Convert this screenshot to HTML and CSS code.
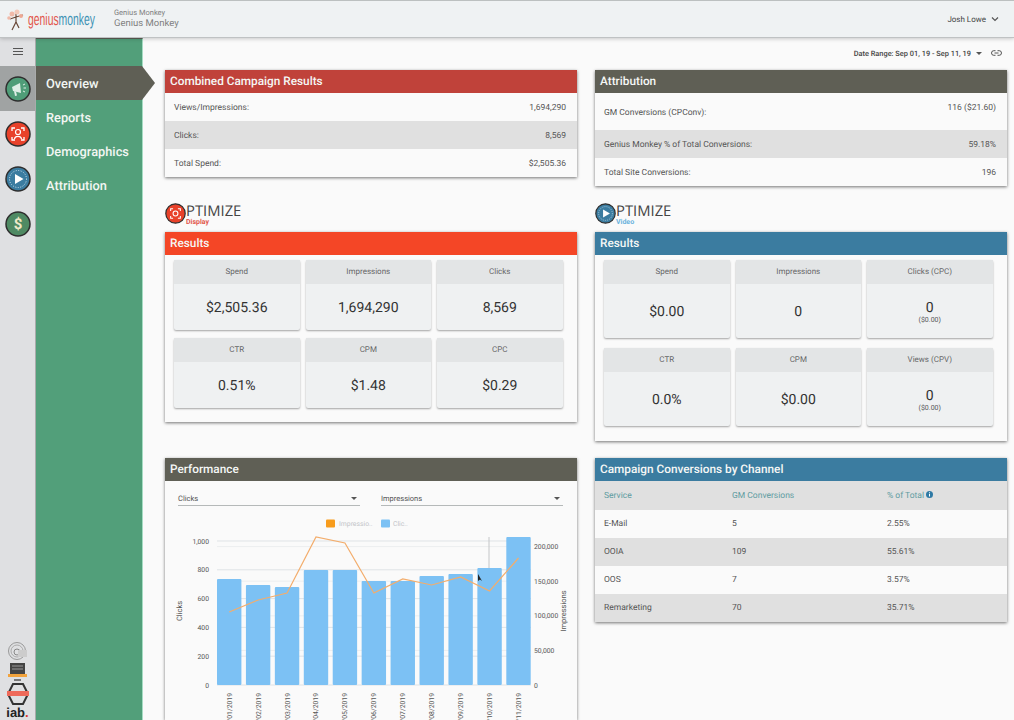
FILE: index.html
```html
<!DOCTYPE html>
<html lang="en">
<head>
  <meta charset="UTF-8">
  <title>Genius Monkey</title>
  <link rel="stylesheet" href="styles.css">
</head>
<body>

  <header class="topbar">
    <div class="brand">
      <svg class="brand-logo" width="90" height="26" viewBox="0 0 90 26">
        <g stroke="#6b4a3a" stroke-width="1.2" fill="none">
          <path d="M10 8 L10 16 M10 16 L6 24 M10 16 L13 22 M10 11 L4 13 M10 11 L17 9"/>
        </g>
        <circle cx="6" cy="8" r="2.500" fill="#f0b9a8"/>
        <circle cx="11" cy="6" r="2.500" fill="#f3c8b8"/>
        <circle cx="15" cy="10" r="2" fill="#eda894"/>
        <circle cx="3" cy="12" r="1.800" fill="#f0b9a8"/>
        <text x="22" y="19" class="brand-word" textLength="67" lengthAdjust="spacingAndGlyphs"><tspan class="brand-red">genius</tspan><tspan class="brand-blue">monkey</tspan></text>
      </svg>
      <div class="brand-names">
        <div class="brand-small">Genius Monkey</div>
        <div class="brand-big">Genius Monkey</div>
      </div>
    </div>
    <div class="user">
      Josh Lowe
      <svg width="8" height="6" viewBox="0 0 8 6"><path d="M1 1.500 L4 4.500 L7 1.500" fill="none" stroke="#555" stroke-width="1.200"/></svg>
    </div>
  </header>

  <div class="app">
    <aside class="rail">
      <div class="burger"><span></span><span></span><span></span></div>

      <div class="rail-item active">
        <svg width="26" height="26" viewBox="0 0 26 26">
          <circle cx="13" cy="13" r="12" fill="#4f9d78" stroke="#2e2e2e" stroke-width="1.500"/>
          <path d="M7 11 L15 7 L16 17 L8 15 Z" fill="#dfeee6"/>
          <path d="M9 15 L10 20 L12 19.500 L11 15.500" fill="#dfeee6"/>
          <path d="M18 9 L20 8 M18.500 12 L21 12 M18 15 L20 16" stroke="#dfeee6" stroke-width="1"/>
        </svg>
      </div>
      <div class="rail-item">
        <svg width="26" height="26" viewBox="0 0 26 26">
          <circle cx="13" cy="13" r="12" fill="#e8412a" stroke="#2e2e2e" stroke-width="1.500"/>
          <path d="M7 10 V7 H10 M16 7 H19 V10 M19 16 V19 H16 M10 19 H7 V16" fill="none" stroke="#fff" stroke-width="1.300"/>
          <circle cx="13" cy="11" r="2.500" fill="none" stroke="#fff" stroke-width="1.200"/>
          <path d="M9.500 18 C10 14.500 16 14.500 16.500 18" fill="none" stroke="#fff" stroke-width="1.200"/>
        </svg>
      </div>
      <div class="rail-item">
        <svg width="26" height="26" viewBox="0 0 26 26">
          <circle cx="13" cy="13" r="12" fill="#3b7ca0" stroke="#2e2e2e" stroke-width="1.500"/>
          <circle cx="13" cy="13" r="8.500" fill="none" stroke="#cfe3ee" stroke-width="1" stroke-dasharray="1 1.500"/>
          <path d="M10 8 L18.500 13 L10 18 Z" fill="#fff"/>
        </svg>
      </div>
      <div class="rail-item">
        <svg width="26" height="26" viewBox="0 0 26 26">
          <circle cx="13" cy="13" r="12" fill="#4f8a63" stroke="#2e2e2e" stroke-width="1.500"/>
          <text x="13" y="18" class="rail-dollar" text-anchor="middle">$</text>
        </svg>
      </div>

      <div class="rail-foot">
        <svg width="22" height="20" viewBox="0 0 22 20">
          <circle cx="10" cy="10" r="8.500" fill="none" stroke="#999" stroke-width="1"/>
          <circle cx="10" cy="10" r="6" fill="none" stroke="#aaa" stroke-width="1"/>
          <circle cx="10" cy="11" r="3" fill="none" stroke="#888" stroke-width="1"/>
          <rect x="11" y="9" width="9" height="7" fill="#ccc"/>
        </svg>
        <svg width="22" height="20" viewBox="0 0 22 20">
          <rect x="3" y="1" width="15" height="11" fill="#444"/>
          <path d="M5 4 H16 M5 7 H16" stroke="#999" stroke-width="1"/>
          <rect x="1" y="12" width="19" height="3" fill="#f2a33c"/>
          <path d="M7 18 H14" stroke="#555" stroke-width="1.500"/>
        </svg>
        <svg width="24" height="22" viewBox="0 0 24 22">
          <path d="M7 1 H17 L22 11 L17 21 H7 L2 11 Z" fill="none" stroke="#333" stroke-width="2"/>
          <rect x="1" y="8" width="22" height="5" fill="#ee6a5a"/>
        </svg>
        <div class="iab">iab<span>.</span></div>
      </div>
    </aside>

    <nav class="side-menu">
      <a class="menu-item active">Overview</a>
      <a class="menu-item">Reports</a>
      <a class="menu-item">Demographics</a>
      <a class="menu-item">Attribution</a>
    </nav>

    <main class="content">
      <div class="date-range">
        <span>Date Range: Sep 01, 19 - Sep 11, 19</span>
        <span class="caret"></span>
        <svg width="11" height="6" viewBox="0 0 11 6"><path d="M4.500 .7 H2.800 a2.300 2.300 0 0 0 0 4.600 H4.500 M6.500 .7 H8.200 a2.300 2.300 0 0 1 0 4.600 H6.500 M3.500 3 H7.500" fill="none" stroke="#444" stroke-width=".9"/></svg>
      </div>

      <div class="dash-grid">
        <section class="card">
          <h2 class="card-head red">Combined Campaign Results</h2>
          <div class="row"><span>Views/Impressions:</span><span>1,694,290</span></div>
          <div class="row striped"><span>Clicks:</span><span>8,569</span></div>
          <div class="row"><span>Total Spend:</span><span>$2,505.36</span></div>
        </section>

        <section class="card">
          <h2 class="card-head dark">Attribution</h2>
          <div class="row row-tall"><span class="label-low">GM Conversions (CPConv):</span><span class="value-high">116 ($21.60)</span></div>
          <div class="row striped"><span>Genius Monkey % of Total Conversions:</span><span>59.18%</span></div>
          <div class="row"><span>Total Site Conversions:</span><span>196</span></div>
        </section>

        <div class="product">
          <div class="optimize">
            <svg width="21" height="21" viewBox="0 0 26 26">
              <circle cx="13" cy="13" r="12" fill="#e8412a" stroke="#2e2e2e" stroke-width="1.500"/>
              <path d="M7 10 V7 H10 M16 7 H19 V10 M19 16 V19 H16 M10 19 H7 V16" fill="none" stroke="#fff" stroke-width="1.300"/>
              <circle cx="13" cy="13" r="3" fill="none" stroke="#fff" stroke-width="1.300"/>
            </svg>
            <div class="optimize-text">
              <div class="optimize-word">PTIMIZE</div>
              <div class="optimize-sub display">Display</div>
            </div>
          </div>
          <section class="card">
            <h2 class="card-head orange">Results</h2>
            <div class="tiles">
              <div class="tile"><div class="tile-head">Spend</div><div class="tile-body">$2,505.36</div></div>
              <div class="tile"><div class="tile-head">Impressions</div><div class="tile-body">1,694,290</div></div>
              <div class="tile"><div class="tile-head">Clicks</div><div class="tile-body">8,569</div></div>
              <div class="tile"><div class="tile-head">CTR</div><div class="tile-body">0.51%</div></div>
              <div class="tile"><div class="tile-head">CPM</div><div class="tile-body">$1.48</div></div>
              <div class="tile"><div class="tile-head">CPC</div><div class="tile-body">$0.29</div></div>
            </div>
          </section>
        </div>

        <div class="product">
          <div class="optimize">
            <svg width="21" height="21" viewBox="0 0 26 26">
              <circle cx="13" cy="13" r="12" fill="#3b7ca0" stroke="#2e2e2e" stroke-width="1.500"/>
              <circle cx="13" cy="13" r="8.500" fill="none" stroke="#cfe3ee" stroke-width="1" stroke-dasharray="1 1.500"/>
              <path d="M10 8 L18.500 13 L10 18 Z" fill="#fff"/>
            </svg>
            <div class="optimize-text">
              <div class="optimize-word">PTIMIZE</div>
              <div class="optimize-sub video">Video</div>
            </div>
          </div>
          <section class="card">
            <h2 class="card-head blue">Results</h2>
            <div class="tiles tiles-tall">
              <div class="tile"><div class="tile-head">Spend</div><div class="tile-body">$0.00</div></div>
              <div class="tile"><div class="tile-head">Impressions</div><div class="tile-body">0</div></div>
              <div class="tile"><div class="tile-head">Clicks (CPC)</div><div class="tile-body">0<small>($0.00)</small></div></div>
              <div class="tile"><div class="tile-head">CTR</div><div class="tile-body">0.0%</div></div>
              <div class="tile"><div class="tile-head">CPM</div><div class="tile-body">$0.00</div></div>
              <div class="tile"><div class="tile-head">Views (CPV)</div><div class="tile-body">0<small>($0.00)</small></div></div>
            </div>
          </section>
        </div>

        <section class="card">
          <h2 class="card-head dark">Performance</h2>
          <div class="selects">
            <div class="select">Clicks<span class="caret"></span></div>
            <div class="select">Impressions<span class="caret"></span></div>
          </div>
          <svg class="chart" id="chart" width="412" height="214" viewBox="165 506 412 214"></svg>
        </section>

        <section class="card">
          <h2 class="card-head blue">Campaign Conversions by Channel</h2>
          <div class="chan-row chan-head">
            <span>Service</span><span>GM Conversions</span>
            <span>% of Total <svg width="7" height="7" viewBox="0 0 7 7"><circle cx="3.500" cy="3.500" r="3.500" fill="#2f7aa5"/><rect x="3" y="3" width="1" height="2.500" fill="#fff"/><rect x="3" y="1.300" width="1" height="1" fill="#fff"/></svg></span>
          </div>
          <div class="chan-row"><span>E-Mail</span><span>5</span><span>2.55%</span></div>
          <div class="chan-row striped"><span>OOIA</span><span>109</span><span>55.61%</span></div>
          <div class="chan-row"><span>OOS</span><span>7</span><span>3.57%</span></div>
          <div class="chan-row striped"><span>Remarketing</span><span>70</span><span>35.71%</span></div>
        </section>
      </div>
    </main>
  </div>

  <script src="chart.js"></script>
</body>
</html>
```

FILE: styles.css
```css
* {
  box-sizing: border-box;
}

html, body {
  height: 100%;
}

body {
  margin: 0;
  overflow: hidden;
  font-family: Roboto, sans-serif;
  text-rendering: geometricPrecision;
  background: #fafafa;
  color: #555;
}

.topbar {
  position: relative;
  z-index: 2;
  display: flex;
  justify-content: space-between;
  align-items: center;
  height: 38px;
  padding: 0 15px 0 6px;
  background: #eff2f3;
  border-top: 1px solid #bcc0c0;
  border-bottom: 1px solid #bfc2c3;
  box-shadow: 0 1px 4px rgba(0, 0, 0, 0.2);
}

.brand {
  display: flex;
  align-items: center;
}

.brand-word {
  font-family: "Liberation Sans", sans-serif;
  font-size: 17px;
}

.brand-red {
  fill: #e2574c;
}

.brand-blue {
  fill: #3f93b5;
}

.brand-names {
  margin-left: 18px;
  color: #808080;
}

.brand-small {
  font-size: 7.5px;
  line-height: 10px;
}

.brand-big {
  font-size: 9.5px;
  line-height: 12px;
}

.user {
  display: flex;
  align-items: center;
  gap: 5px;
  font-size: 8px;
  color: #444;
}

.app {
  display: flex;
  height: calc(100% - 38px);
}

.rail {
  position: relative;
  width: 36px;
  background: #dfe0e2;
  border-right: 1px solid #a9abab;
}

.burger {
  display: flex;
  flex-direction: column;
  align-items: center;
  gap: 2px;
  height: 28px;
  padding-top: 10px;
}

.burger span {
  width: 10px;
  height: 1px;
  background: #555;
}

.rail-item {
  display: flex;
  justify-content: center;
  align-items: center;
  height: 45px;
}

.rail-item.active {
  background: #a0a3a3;
}

.rail-dollar {
  font-family: Roboto, sans-serif;
  font-size: 15px;
  font-weight: 700;
  fill: #f0e9c8;
}

.rail-foot {
  position: absolute;
  left: 0;
  right: 0;
  bottom: 0;
  display: flex;
  flex-direction: column;
  align-items: center;
  gap: 1px;
}

.iab {
  font-family: "Liberation Sans", sans-serif;
  font-size: 13px;
  font-weight: 700;
  line-height: 14px;
  color: #222;
}

.iab span {
  color: #d8392b;
}

.side-menu {
  position: relative;
  z-index: 1;
  width: 107px;
  padding-top: 27px;
  background: #529f7a;
  border-top: 1px solid #5f5f55;
  border-right: 1px solid #a5dcc3;
}

.menu-item {
  display: block;
  height: 34px;
  padding-left: 10px;
  font-size: 12.8px;
  font-weight: 500;
  line-height: 37px;
  color: #f2f6f3;
}

.menu-item.active {
  position: relative;
  background: #5f5f55;
}

.menu-item.active::after {
  content: "";
  position: absolute;
  top: 0;
  left: 100%;
  border-left: 13px solid #5f5f55;
  border-top: 17px solid transparent;
  border-bottom: 17px solid transparent;
}

.content {
  flex: 1;
  min-width: 0;
  padding: 0 7px 0 22px;
}

.date-range {
  display: flex;
  justify-content: flex-end;
  align-items: center;
  gap: 5px;
  height: 32px;
  padding: 0 5px 2px 0;
  font-size: 7.4px;
  font-weight: 500;
  color: #444;
}

.date-range svg {
  margin-left: 4px;
}

.caret {
  width: 0;
  height: 0;
  border-left: 3px solid transparent;
  border-right: 3px solid transparent;
  border-top: 3px solid #555;
}

.dash-grid {
  display: grid;
  grid-template-columns: 412px 412px;
  grid-template-rows: 115px 237px auto;
  column-gap: 18px;
  row-gap: 18px;
  align-items: start;
}

.card {
  background: #fafafa;
  box-shadow: 0 1px 3px rgba(0, 0, 0, 0.55);
  overflow: hidden;
}

.card-head {
  margin: 0;
  height: 23px;
  padding-left: 5px;
  font-size: 11.8px;
  font-weight: 500;
  line-height: 23px;
  color: #f5f7f5;
}

.card-head.red {
  background: #c0423a;
}

.card-head.dark {
  background: #5f5f55;
}

.card-head.orange {
  background: #f44626;
}

.card-head.blue {
  background: #3b7ca0;
}

.row {
  display: flex;
  justify-content: space-between;
  align-items: center;
  height: 28px;
  padding: 1px 11px 0 9px;
  font-size: 8.5px;
  color: #555;
}

.row-tall {
  height: 37px;
}

.label-low {
  padding-top: 1px;
}

.value-high {
  padding-bottom: 9px;
}

.striped {
  background: #e0e0e0;
}

.product {
  display: flex;
  flex-direction: column;
  gap: 7px;
}

.optimize {
  display: flex;
  align-items: flex-start;
  height: 22px;
}

.optimize-text {
  margin-top: 1px;
}

.optimize-word {
  font-family: "Open Sans", sans-serif;
  font-size: 14.8px;
  line-height: 15px;
  color: #444;
}

.optimize-sub {
  font-size: 7px;
  font-weight: 700;
  line-height: 7px;
}

.optimize-sub.display {
  color: #e2574c;
}

.optimize-sub.video {
  color: #6cb4de;
}

.tiles {
  display: grid;
  grid-template-columns: repeat(3, 125.5px);
  grid-auto-rows: 70px;
  gap: 8px 6px;
  padding: 5px 0 14px 9px;
}

.tiles-tall {
  grid-auto-rows: 78px;
  gap: 10px 6px;
  padding-bottom: 15px;
}

.tile {
  display: flex;
  flex-direction: column;
  background: #eff1f2;
  border-radius: 2px;
  box-shadow: 0 1px 2px rgba(0, 0, 0, 0.35);
}

.tile-head {
  height: 24px;
  font-size: 8px;
  line-height: 23px;
  text-align: center;
  color: #666;
  background: #e3e5e6;
}

.tile-body {
  flex: 1;
  display: flex;
  flex-direction: column;
  justify-content: center;
  align-items: center;
  padding-top: 1px;
  font-size: 14px;
  color: #333;
}

.tile-body small {
  font-size: 7px;
  color: #555;
}

.selects {
  display: flex;
  gap: 21px;
  padding: 10px 14px 0 13px;
}

.select {
  flex: 1;
  display: flex;
  justify-content: space-between;
  align-items: flex-start;
  height: 15px;
  padding: 3px 3px 0 0;
  font-size: 7.5px;
  color: #555;
  border-bottom: 1px solid #b5b9b9;
}

.select .caret {
  margin-top: 3px;
}

.chart {
  display: block;
}

.tick {
  font-size: 6.8px;
  fill: #555;
}

.legend {
  font-size: 6.8px;
  fill: #c2c4c8;
}

.axis {
  font-size: 7.5px;
  fill: #555;
}

.chan-row {
  display: grid;
  grid-template-columns: 128px 155px 1fr;
  align-items: center;
  height: 28px;
  padding-left: 9px;
  font-size: 8.5px;
  color: #555;
}

.chan-head {
  height: 29px;
  color: #5f9ca0;
  background: #e0e0e0;
}
```

FILE: chart.js
```js
// bar tops and line points are in page coordinates, same as the chart viewBox
const plotBottom = 685;
const barTops = [579, 585, 587, 570, 570, 581, 581, 576, 574, 568, 537];
const linePoints = [612, 600, 593, 537, 543, 593, 579, 585, 577, 591, 558];
const leftTicks = ['0', '200', '400', '600', '800', '1,000'];
const rightTicks = ['0', '50,000', '100,000', '150,000', '200,000'];

let svg = '';

leftTicks.forEach((t, i) => {
  const y = plotBottom - i * 28.8;
  svg += `<line x1="217" x2="531" y1="${y}" y2="${y}" stroke="#dfe3e6" stroke-width="1"/>`;
  svg += `<text x="209" y="${y + 2.5}" class="tick" text-anchor="end">${t}</text>`;
});

rightTicks.forEach((t, i) => {
  const y = plotBottom - i * 34.6;
  svg += `<line x1="217" x2="531" y1="${y}" y2="${y}" stroke="#eceeef" stroke-width="1"/>`;
  svg += `<text x="534" y="${y + 2.5}" class="tick">${t}</text>`;
});

let points = [];
barTops.forEach((top, i) => {
  const x = 217 + i * 28.93;
  const cx = x + 12.2;
  svg += `<rect x="${x}" y="${top}" width="24.4" height="${plotBottom - top}" rx="1" fill="#7cc1f4"/>`;
  svg += `<text transform="translate(${cx + 2.5} 693) rotate(-90)" class="tick" text-anchor="end">09/${String(i + 1).padStart(2, '0')}/2019</text>`;
  points.push(cx + ',' + linePoints[i]);
});

svg += `<line x1="489" x2="489" y1="537" y2="568" stroke="#c4c6c8" stroke-width="1"/>`;
svg += `<polyline points="${points.join(' ')}" fill="none" stroke="#f3ad6c" stroke-width="1.2"/>`;

svg += `<rect x="326" y="519.500" width="9" height="8" rx="1" fill="#f89c1c"/>`;
svg += `<text x="339" y="526" class="legend">Impressio..</text>`;
svg += `<rect x="381" y="519.500" width="9" height="8" rx="1" fill="#7cc1f4"/>`;
svg += `<text x="393" y="526" class="legend">Clic..</text>`;

svg += `<text transform="translate(182 611) rotate(-90)" class="axis" text-anchor="middle">Clicks</text>`;
svg += `<text transform="translate(566 611) rotate(-90)" class="axis" text-anchor="middle">Impressions</text>`;

svg += `<path d="M478 574 L478 581 L480 579.500 L482 581 Z" fill="#222"/>`;

document.getElementById('chart').innerHTML = svg;
```
